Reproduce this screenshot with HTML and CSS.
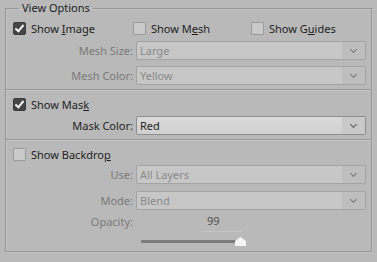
FILE: index.html
```html
<!DOCTYPE html>
<html lang="en">
<head>
    <meta charset="UTF-8">
    <title>View Options</title>
    <link rel="stylesheet" href="styles.css">
</head>
<body>
    <fieldset class="group">
        <legend>View Options</legend>

        <div class="checks first">
            <label class="check"><span class="box on"></span><span>Show <u>I</u>mage</span></label>
            <label class="check"><span class="box"></span><span>Show M<u>e</u>sh</span></label>
            <label class="check"><span class="box"></span><span>Show G<u>u</u>ides</span></label>
        </div>
        <div class="field mesh-size off">
            <span class="label">Mesh Size:</span>
            <div class="select">Large<span class="arrow"></span></div>
        </div>
        <div class="field mesh-color off">
            <span class="label">Mesh Color:</span>
            <div class="select">Yellow<span class="arrow"></span></div>
        </div>

        <div class="sep"></div>

        <div class="checks">
            <label class="check"><span class="box on"></span><span>Show Mas<u>k</u></span></label>
        </div>
        <div class="field mask-color">
            <span class="label">Mask Color:</span>
            <div class="select">Red<span class="arrow"></span></div>
        </div>

        <div class="sep"></div>

        <div class="checks">
            <label class="check"><span class="box"></span><span>Show Backdro<u>p</u></span></label>
        </div>
        <div class="field use off">
            <span class="label">Use:</span>
            <div class="select">All Layers<span class="arrow"></span></div>
        </div>
        <div class="field mode off">
            <span class="label">Mode:</span>
            <div class="select">Blend<span class="arrow"></span></div>
        </div>
        <div class="field opacity off">
            <span class="label">Opacity:</span>
            <div class="slider-box">
                <div class="value">99</div>
                <div class="slider"><div class="track"></div><div class="thumb"></div></div>
            </div>
        </div>
    </fieldset>
</body>
</html>
```

FILE: styles.css
```css
html, body {
    margin: 0;
    padding: 0;
    background: #b9b9b9;
}
body {
    width: 377px;
    height: 262px;
    font-family: "Noto Sans", sans-serif;
    font-size: 11px;
    color: #1d1d1d;
    overflow: hidden;
}
.group {
    margin: 1px 0 0 5px;
    padding: 0 0 5px 0;
    width: 365px;
    border: 1px solid #979797;
    box-shadow: inset 1px 1px 0 #c4c4c4, 1px 1px 0 #c4c4c4;
    box-sizing: content-box;
}
.group legend {
    margin-left: 13px;
    padding: 0 3px;
    line-height: 14px;
    color: #202020;
}
u {
    text-decoration: underline;
    text-underline-offset: 1px;
}
.checks {
    display: grid;
    grid-template-columns: 120px 118px auto;
    height: 20px;
    align-items: center;
    padding-left: 7px;
    margin-top: 3px;
}
.check {
    display: flex;
    align-items: center;
    gap: 5px;
}
.box {
    width: 11px;
    height: 11px;
    border: 1px solid #9a9a9a;
    background: #c9c9c9;
    border-radius: 1px;
    position: relative;
}
.box.on {
    background: #464646;
    border-color: #3c3c3c;
    border-radius: 2px;
}
.box.on::after {
    content: "";
    position: absolute;
    left: 3px;
    top: 0px;
    width: 3px;
    height: 7px;
    border: solid #f4f4f4;
    border-width: 0 2px 2px 0;
    transform: rotate(40deg);
}
.field {
    display: grid;
    grid-template-columns: 127px 230px;
    column-gap: 3px;
    align-items: center;
    height: 19px;
}
.field .label {
    text-align: right;
}
.off .label {
    color: #7a7a7a;
}
.mesh-size { margin-top: 3px; }
.mesh-color { margin-top: 6px; }
.mask-color { margin-top: 2px; }
.use { margin-top: 1px; }
.mode { margin-top: 7px; }
.select {
    position: relative;
    height: 17px;
    line-height: 17px;
    padding-left: 3px;
    border: 1px solid #8e8e8e;
    border-radius: 2px;
    background: linear-gradient(#dadada, #d0d0d0);
    color: #1d1d1d;
}
.off .select {
    border-color: #a3a3a3;
    background: #c7c7c7;
    color: #8a8a8a;
}
.arrow {
    position: absolute;
    right: 0;
    top: 0;
    width: 23px;
    height: 17px;
    background: #c9c9c9;
}
.off .arrow {
    background: #bebebe;
}
.arrow::after {
    content: "";
    position: absolute;
    left: 9px;
    top: 5px;
    width: 4px;
    height: 4px;
    border: solid #5a5a5a;
    border-width: 0 1px 1px 0;
    transform: rotate(45deg);
}
.off .arrow::after {
    border-color: #777;
}
.sep {
    margin-top: 4px;
    height: 1px;
    background: #989898;
    border-bottom: 1px solid #c6c6c6;
}
.opacity {
    height: auto;
    align-items: start;
    margin-top: 4px;
}
.opacity .label {
    margin-top: 1px;
    line-height: 14px;
}
.value {
    margin-left: 68px;
    width: 35px;
    padding-left: 3px;
    line-height: 14px;
    height: 17px;
    border-bottom: 1px solid #c6c6c6;
    color: #505050;
}
.slider {
    position: relative;
    margin-left: 5px;
    width: 105px;
    height: 14px;
}
.track {
    position: absolute;
    left: 0;
    top: 8px;
    width: 100px;
    height: 3px;
    background: #7c7c7c;
    border-radius: 1px;
}
.thumb {
    position: absolute;
    left: 94px;
    top: 5px;
    width: 11px;
    height: 9px;
    background: #f6f6f6;
    clip-path: polygon(50% 0, 100% 45%, 100% 100%, 0 100%, 0 45%);
}
```
